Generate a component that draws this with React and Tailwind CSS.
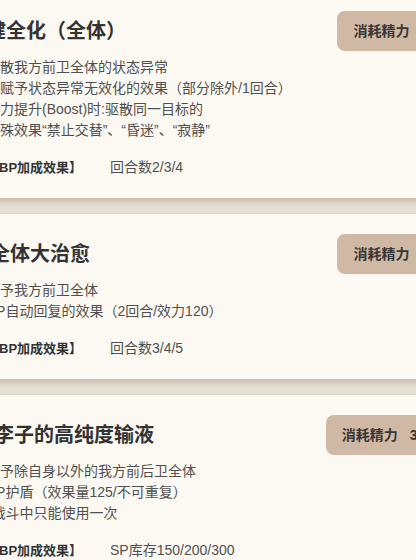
import React from 'react';

const skills = [
  {
    title: '健全化（全体）',
    titleOffset: 'ml-0',
    cost: '12',
    lines: [
      '驱散我方前卫全体的状态异常',
      '并赋予状态异常无效化的效果（部分除外/1回合）',
      '能力提升(Boost)时:驱散同一目标的',
      '特殊效果“禁止交替”、“昏迷”、“寂静”',
    ],
    bp: '回合数2/3/4',
  },
  {
    title: '全体大治愈',
    titleOffset: 'ml-[4px]',
    cost: '18',
    lines: ['赋予我方前卫全体', 'HP自动回复的效果（2回合/效力120）'],
    bp: '回合数3/4/5',
  },
  {
    title: '李子的高纯度输液',
    titleOffset: 'ml-[8px]',
    cost: '3/10',
    lines: ['赋予除自身以外的我方前后卫全体', 'HP护盾（效果量125/不可重复）', '*战斗中只能使用一次'],
    bp: 'SP库存150/200/300',
  },
];

const SkillCard = ({ skill }) => (
  <div className="bg-[#fcf9f3] rounded-lg px-6 pt-5 pb-5 shadow-[0_3px_8px_rgba(80,60,30,0.28)]">
    <div className="flex items-center justify-between">
      <h2 className={`${skill.titleOffset} text-[20px] leading-[28px] font-bold text-[#333333]`}>{skill.title}</h2>
      <div className="h-10 flex items-center rounded-lg bg-[#cfb9a5] px-4 text-[14px] font-bold text-[#383838]">
        <span>消耗精力</span>
        <span className="ml-3">{skill.cost}</span>
      </div>
    </div>
    <div className="mt-[6px] text-[14px] leading-[21px] text-[#505050]">
      {skill.lines.map((line, idx) => (
        <p key={idx}>{line}</p>
      ))}
    </div>
    <div className="mt-4 flex items-center leading-[21px]">
      <span className="w-[124px] shrink-0 text-[13px] font-bold text-[#333333]">【BP加成效果】</span>
      <span className="text-[14px] text-[#505050]">{skill.bp}</span>
    </div>
  </div>
);

const App = () => {
  return (
    <div
      className="w-[416px] h-[560px] overflow-hidden bg-[#e9e2d7]"
      style={{ fontFamily: '"Liberation Sans", "Noto Sans CJK SC", sans-serif' }}
    >
      <div className="-mt-[9px] -ml-[38px] w-[515px] flex flex-col gap-4">
        {skills.map((skill, idx) => (
          <SkillCard key={idx} skill={skill} />
        ))}
      </div>
    </div>
  );
};

export default App;
